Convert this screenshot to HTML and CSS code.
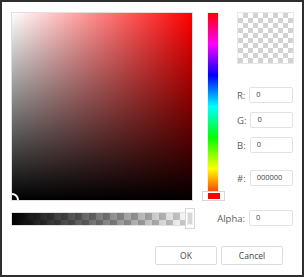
FILE: index.html
```html
<!DOCTYPE html>
<html>
<head>
<meta charset="utf-8">
<link rel="stylesheet" href="styles.css">
</head>
<body>
<div class="frame">
  <div class="main">
    <div class="sv">
      <div class="sv-thumb"></div>
    </div>
    <div class="hue">
      <div class="hue-thumb"><div class="hue-thumb-fill"></div></div>
    </div>
    <div class="side">
      <div class="preview"></div>
      <div class="fields">
        <div class="field"><span class="lbl">R:</span><div class="inp">0</div></div>
        <div class="field"><span class="lbl">G:</span><div class="inp">0</div></div>
        <div class="field"><span class="lbl">B:</span><div class="inp">0</div></div>
        <div class="field hex"><span class="lbl">#:</span><div class="inp">000000</div></div>
      </div>
    </div>
    <div class="alpha">
      <div class="alpha-grad"></div>
      <div class="alpha-thumb"><div class="alpha-thumb-fill"></div></div>
    </div>
    <div class="field alpha-field"><span class="lbl">Alpha:</span><div class="inp">0</div></div>
  </div>
  <div class="buttons">
    <div class="btn">OK</div>
    <div class="btn">Cancel</div>
  </div>
</div>
</body>
</html>
```
FILE: styles.css
```css
html, body {
  margin: 0;
  padding: 0;
  background: #fff;
}
.frame {
  width: 304px;
  height: 277px;
  box-sizing: border-box;
  border: 2px solid #2e2e2e;
  padding: 10px 8px 0 9px;
  font-family: "Open Sans", "Noto Sans", sans-serif;
  color: #333;
}
.main {
  display: grid;
  grid-template-columns: 182px 12px 61px;
  grid-template-rows: 189px 14px;
  column-gap: 14px;
  row-gap: 11px;
}
.sv {
  position: relative;
  overflow: hidden;
  box-sizing: border-box;
  border: 1px solid #e6dede;
  background:
    linear-gradient(to bottom, rgba(0,0,0,0), #000),
    linear-gradient(to right, #fff, rgba(255,255,255,0)),
    #ff0000;
}
.sv-thumb {
  position: absolute;
  left: -7px;
  bottom: -7px;
  width: 10px;
  height: 10px;
  border: 2px solid #fff;
  border-radius: 50%;
}
.hue {
  position: relative;
  box-sizing: border-box;
  border: 1px solid #eee;
  background: linear-gradient(to bottom, #f00 0%, #f0f 16.67%, #00f 33.33%, #0ff 50%, #0f0 66.67%, #ff0 83.33%, #f00 100%);
}
.hue-thumb {
  position: absolute;
  left: -6px;
  bottom: -1px;
  width: 23px;
  height: 10px;
  box-sizing: border-box;
  border: 1px solid #d6d6d6;
  background: #fff;
  display: flex;
  align-items: center;
  justify-content: center;
}
.hue-thumb-fill {
  width: 12px;
  height: 6px;
  background: #f00;
}
.side {
  padding-left: 4px;
  display: flex;
  flex-direction: column;
}
.preview {
  width: 57px;
  height: 52px;
  box-sizing: border-box;
  border: 1px solid #e8e8e8;
  background-color: #fff;
  background-image:
    linear-gradient(45deg, #d2d2d2 25%, transparent 25%, transparent 75%, #d2d2d2 75%),
    linear-gradient(45deg, #d2d2d2 25%, transparent 25%, transparent 75%, #d2d2d2 75%);
  background-size: 10px 10px;
  background-position: 0 0, 5px 5px;
}
.fields {
  margin-top: 22px;
  display: flex;
  flex-direction: column;
  gap: 7px;
}
.field {
  display: flex;
  align-items: center;
  justify-content: flex-end;
  gap: 4px;
  margin-right: 1px;
}
.field.hex {
  margin-top: 8px;
}
.lbl {
  font-size: 9.5px;
  color: #5c5c5c;
  line-height: 16px;
  padding-top: 2px;
}
.inp {
  width: 44px;
  height: 16px;
  box-sizing: border-box;
  border: 1px solid #e2e2e2;
  border-radius: 2px;
  font-size: 7.5px;
  line-height: 12px;
  padding-left: 6px;
  color: #444;
  background: #fff;
}
.alpha {
  position: relative;
  box-sizing: border-box;
  border: 1px solid #e0e0e0;
  background-color: #fff;
  background-image:
    linear-gradient(45deg, #cfcfcf 25%, transparent 25%, transparent 75%, #cfcfcf 75%),
    linear-gradient(45deg, #cfcfcf 25%, transparent 25%, transparent 75%, #cfcfcf 75%);
  background-size: 14px 14px;
  background-position: 0 0, 7px 7px;
}
.alpha-grad {
  position: absolute;
  inset: 0;
  background: linear-gradient(to right, #000, rgba(0,0,0,0));
}
.alpha-thumb {
  position: absolute;
  right: -3px;
  top: -5px;
  width: 10px;
  height: 21px;
  box-sizing: border-box;
  border: 1px solid #d6d6d6;
  background: #fff;
  display: flex;
  align-items: center;
  justify-content: center;
}
.alpha-thumb-fill {
  width: 6px;
  height: 13px;
  background: #d6d6d6;
  border: 1px solid #eee;
  box-sizing: border-box;
}
.alpha-field {
  grid-column: 2 / 4;
  grid-row: 2;
  margin-top: -3px;
  align-self: start;
}
.buttons {
  margin-top: 20px;
  display: flex;
  justify-content: flex-end;
  gap: 4px;
  padding-right: 11px;
}
.btn {
  width: 62px;
  height: 19px;
  box-sizing: border-box;
  border: 1px solid #dcdcdc;
  border-radius: 2px;
  font-size: 8.5px;
  line-height: 17px;
  text-align: center;
  color: #444;
}
```
